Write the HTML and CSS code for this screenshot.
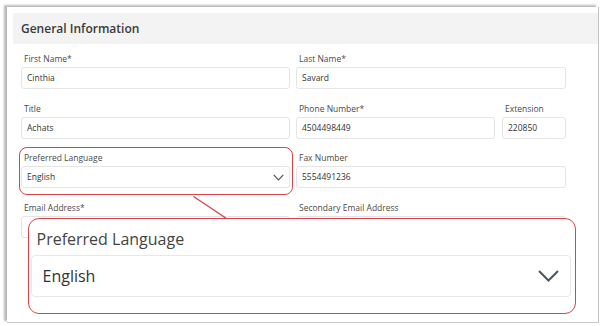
FILE: index.html
```html
<!DOCTYPE html>
<html>
<head>
<meta charset="utf-8">
<link rel="stylesheet" href="styles.css">
</head>
<body>
<div class="frame">
  <div class="header">General Information</div>
  <div class="form">
    <div class="field">
      <div class="label">First Name*</div>
      <div class="input">Cinthia</div>
    </div>
    <div class="field">
      <div class="label">Last Name*</div>
      <div class="input">Savard</div>
    </div>
    <div class="field">
      <div class="label">Title</div>
      <div class="input">Achats</div>
    </div>
    <div class="split">
      <div class="field">
        <div class="label">Phone Number*</div>
        <div class="input">4504498449</div>
      </div>
      <div class="field">
        <div class="label">Extension</div>
        <div class="input">220850</div>
      </div>
    </div>
    <div class="field highlighted">
      <div class="label">Preferred Language</div>
      <div class="input select">English
        <svg class="chev-s" width="11" height="7" viewBox="0 0 11 7"><path d="M0.7 0.8 L5.5 5.8 L10.3 0.8" fill="none" stroke="#555" stroke-width="1.2"/></svg>
      </div>
    </div>
    <div class="field">
      <div class="label">Fax Number</div>
      <div class="input">5554491236</div>
    </div>
    <div class="field">
      <div class="label">Email Address*</div>
      <div class="input"></div>
    </div>
    <div class="field">
      <div class="label">Secondary Email Address</div>
      <div class="input"></div>
    </div>
  </div>
  <svg class="connector" width="34" height="23" viewBox="0 0 34 23"><line x1="0.5" y1="0.5" x2="33.5" y2="22.5" stroke="#d9444c" stroke-width="1.3"/></svg>
  <div class="callout">
    <div class="callout-label">Preferred Language</div>
    <div class="callout-select">English
      <svg width="21" height="12" viewBox="0 0 21 12"><path d="M1 1 L10.5 10.5 L20 1" fill="none" stroke="#4a5563" stroke-width="2"/></svg>
    </div>
  </div>
</div>
</body>
</html>
```
FILE: styles.css
```css
* { box-sizing: border-box; }
body {
  margin: 0;
  background: #fff;
  font-family: "Open Sans", "Noto Sans", sans-serif;
  color: #333;
}
.frame {
  position: relative;
  margin: 7px 0 0 7px;
  width: 592px;
  height: 316px;
  border-right: 1px solid #c4c4c4;
  border-bottom: 1px solid #c8c8c8;
  box-shadow: -3px -2px 2px rgba(0,0,0,0.28);
  padding: 6px 0 0 6px;
  background: #fff;
}
.header {
  height: 31px;
  background: #f3f3f3;
  font-size: 12px;
  font-weight: 600;
  color: #3a3a3a;
  line-height: 31px;
  padding-left: 8px;
}
.form {
  margin-top: 10px;
  margin-left: 8px;
  width: 545px;
  display: grid;
  grid-template-columns: 269px 270px;
  column-gap: 6px;
  row-gap: 14.5px;
}
.split {
  display: grid;
  grid-template-columns: 199px 64px;
  column-gap: 7px;
}
.field { position: relative; }
.label {
  font-size: 8.5px;
  line-height: 10px;
  height: 10px;
  color: #4a4a4a;
  padding-left: 3px;
  margin-bottom: 3px;
  white-space: nowrap;
}
.input {
  height: 22px;
  border: 1px solid #e5e5e5;
  border-radius: 3px;
  font-size: 8.5px;
  line-height: 20px;
  padding-left: 5px;
  color: #333;
  white-space: nowrap;
}
.select {
  display: flex;
  align-items: center;
  justify-content: space-between;
  padding-right: 5px;
}
.highlighted::after {
  content: "";
  position: absolute;
  left: -2px;
  top: -6px;
  right: -3px;
  bottom: -7px;
  border: 1.3px solid #d9444c;
  border-radius: 8px;
}
.connector {
  position: absolute;
  left: 186px;
  top: 189px;
}
.callout {
  position: absolute;
  left: 21px;
  top: 211px;
  width: 548px;
  height: 96px;
  background: #fff;
  border: 1.5px solid #d9444c;
  border-radius: 11px;
  padding: 10px 4.5px 0 1.5px;
}
.callout-label {
  font-size: 16px;
  line-height: 20px;
  color: #444;
  padding-left: 6px;
  margin-bottom: 6px;
}
.callout-select {
  height: 42px;
  border: 1px solid #e8e8e8;
  border-radius: 4px;
  font-size: 16px;
  color: #333;
  padding: 0 11px 0 11px;
  display: flex;
  align-items: center;
  justify-content: space-between;
}
```
